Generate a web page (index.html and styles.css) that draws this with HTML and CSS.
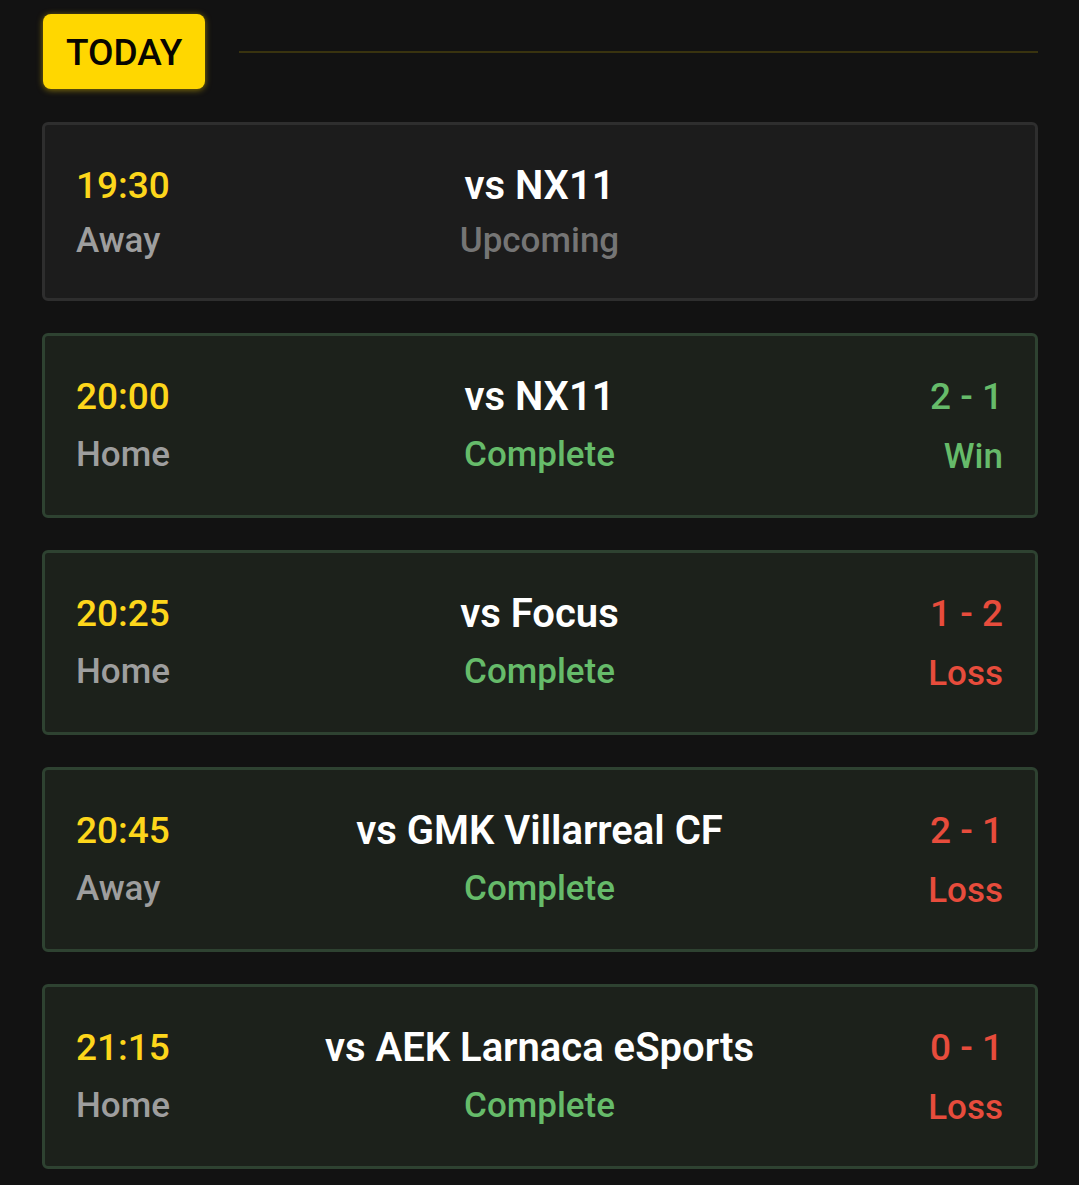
FILE: index.html
```
<!DOCTYPE html>
<html lang="en">
<head>
<meta charset="utf-8">
<meta name="viewport" content="width=device-width, initial-scale=1">
<title>Fixtures</title>
<link rel="stylesheet" href="styles.css">
</head>
<body>
<main class="schedule">
  <header class="day-header">
    <h1 class="day-badge">TODAY</h1>
    <span class="day-line"></span>
  </header>
  <section class="matches">
    <article class="match">
      <div class="when"><time class="time">19:30</time><span class="venue">Away</span></div>
      <div class="fixture"><h2 class="opponent">vs NX11</h2><span class="status">Upcoming</span></div>
      <div class="result"></div>
    </article>
    <article class="match complete">
      <div class="when"><time class="time">20:00</time><span class="venue">Home</span></div>
      <div class="fixture"><h2 class="opponent">vs NX11</h2><span class="status">Complete</span></div>
      <div class="result win"><span class="score">2 - 1</span><span class="outcome">Win</span></div>
    </article>
    <article class="match complete">
      <div class="when"><time class="time">20:25</time><span class="venue">Home</span></div>
      <div class="fixture"><h2 class="opponent">vs Focus</h2><span class="status">Complete</span></div>
      <div class="result loss"><span class="score">1 - 2</span><span class="outcome">Loss</span></div>
    </article>
    <article class="match complete">
      <div class="when"><time class="time">20:45</time><span class="venue">Away</span></div>
      <div class="fixture"><h2 class="opponent">vs GMK Villarreal CF</h2><span class="status">Complete</span></div>
      <div class="result loss"><span class="score">2 - 1</span><span class="outcome">Loss</span></div>
    </article>
    <article class="match complete">
      <div class="when"><time class="time">21:15</time><span class="venue">Home</span></div>
      <div class="fixture"><h2 class="opponent">vs AEK Larnaca eSports</h2><span class="status">Complete</span></div>
      <div class="result loss"><span class="score">0 - 1</span><span class="outcome">Loss</span></div>
    </article>
  </section>
</main>
</body>
</html>
```
FILE: styles.css
```
* {
  box-sizing: border-box;
}

body {
  margin: 0;
  background: #121212;
  color: #fff;
  font-family: Roboto, "Liberation Sans", sans-serif;
  font-weight: 500;
}

.schedule {
  padding: 14px 41px 16px 42px;
}

.day-header {
  display: flex;
  align-items: center;
  gap: 34px;
}

.day-badge {
  margin: 0 0 0 1px;
  padding: 17px 23px 15px;
  border-radius: 8px;
  background: #ffd700;
  box-shadow: 0 1px 6px rgba(255, 215, 0, 0.5);
  color: #080600;
  font-size: 37px;
  font-weight: 500;
  line-height: 43px;
}

.day-line {
  flex: 1;
  height: 2px;
  background: #39330f;
}

.matches {
  display: flex;
  flex-direction: column;
  gap: 32px;
  margin-top: 33px;
}

.match {
  display: grid;
  grid-template-columns: 160px 1fr 160px;
  padding: 33px 32px 30px 31px;
  border: 3px solid #2e2e2e;
  border-radius: 6px;
  background: #1c1c1c;
  font-size: 35px;
  line-height: 54px;
}

.complete {
  border-color: #2e4231;
  background: #1c211b;
  line-height: 60px;
}

.when,
.fixture,
.result {
  display: flex;
  flex-direction: column;
}

.fixture {
  align-items: center;
}

.result {
  align-items: flex-end;
}

.time,
.score {
  font-size: 37px;
  line-height: 56px;
}

.outcome {
  margin-top: 4px;
  line-height: 56px;
}

.time {
  color: #fdd61b;
}

.venue {
  color: #9e9e9e;
}

.opponent {
  margin: 0;
  font-size: 40px;
  font-weight: 600;
  line-height: 56px;
}

.status {
  color: #757575;
}

.complete .status,
.win {
  color: #66bb6a;
}

.loss {
  color: #e74c3c;
}
```
